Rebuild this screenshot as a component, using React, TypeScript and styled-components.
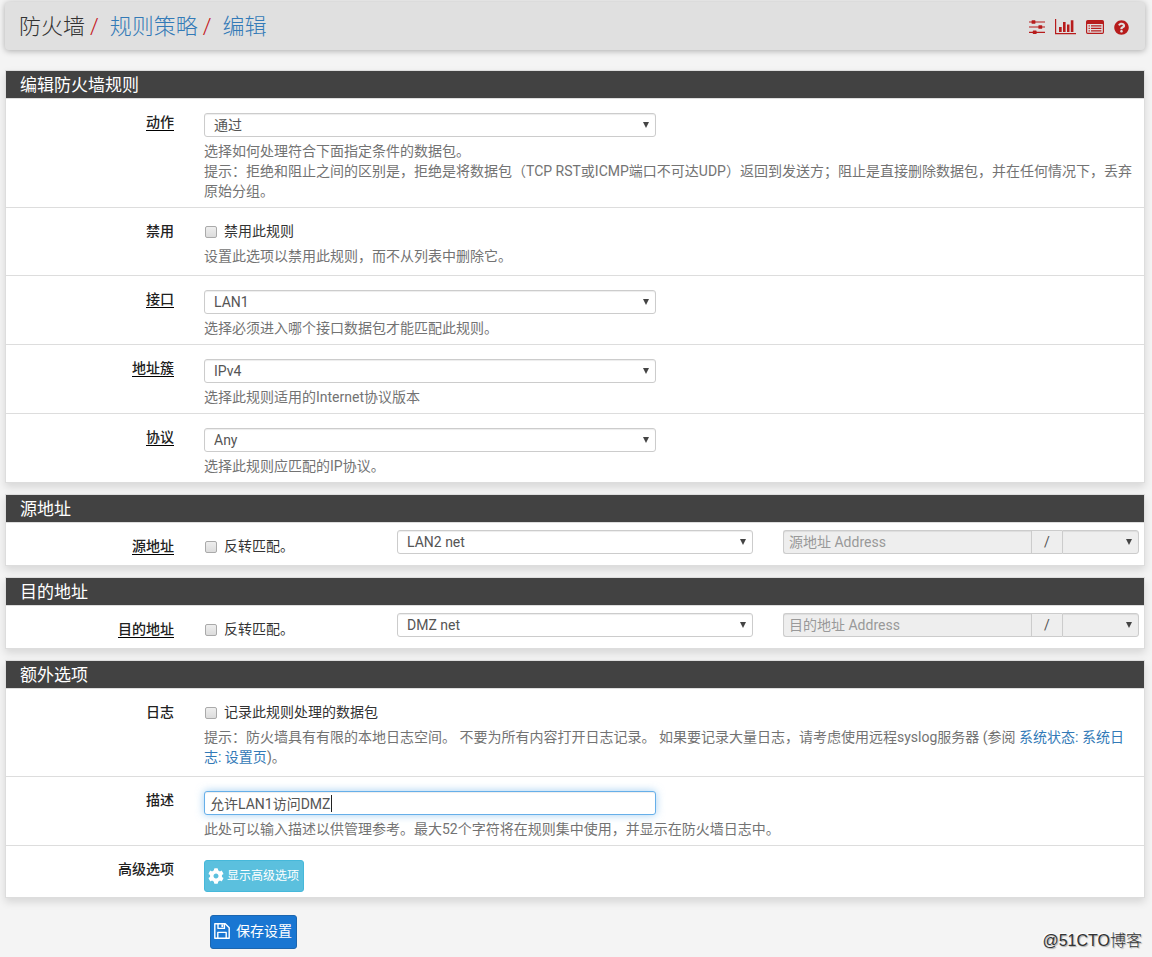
import React from "react";
import styled, { createGlobalStyle, css } from "styled-components";
import { FaCog, FaQuestionCircle } from "react-icons/fa";

const GlobalStyle = createGlobalStyle`
  *, *::before, *::after { box-sizing: border-box; }
  body {
    margin: 0;
    background: #f4f4f4;
    color: #333;
    font: 14px/20px Roboto, "Noto Sans CJK SC", sans-serif;
    text-spacing-trim: space-all;
  }
  a { color: #337ab7; text-decoration: none; }
  a:hover { text-decoration: underline; }
`;

const Page = styled.div`
  position: relative;
  padding: 2px 7px 8px 5px;
`;

const Header = styled.header`
  display: flex;
  align-items: center;
  justify-content: space-between;
  height: 48px;
  margin-bottom: 20px;
  padding: 2px 16px 0 14px;
  background: #e0e0e0;
  border-radius: 4px;
  box-shadow: 0 1px 6px rgba(0, 0, 0, 0.3);
`;

const Breadcrumb = styled.ol`
  display: flex;
  margin: 0;
  padding: 0;
  list-style: none;
  font-size: 22px;
  line-height: 30px;
  font-weight: 300;

  li + li::before {
    content: "/";
    padding: 0 11px 0 5px;
    color: #c4161c;
  }
`;

const HeaderIcons = styled.nav`
  display: flex;
  align-items: center;
  gap: 10px;

  a { display: block; color: #b71c1c; }
  svg { display: block; }
`;

const PanelBox = styled.section`
  margin-bottom: 11px;
  background: #fff;
  border: 1px solid #ddd;
  box-shadow: 0 4px 8px rgba(0, 0, 0, 0.12);
`;

const PanelTitle = styled.h2`
  margin: 0;
  padding: 1px 14px 0;
  background: #424242;
  border-bottom: 1px solid #ddd;
  color: #fff;
  font-size: 17px;
  line-height: 26px;
  font-weight: 400;
`;

const PanelBody = styled.div`
  overflow: hidden;

  > * + * { border-top: 1px solid #ddd; }
`;

const Row = styled.div<{ $split?: boolean }>`
  display: grid;
  grid-template-columns: ${(p) => (p.$split ? "2fr 2fr 4fr 4fr" : "2fr 10fr")};
  margin: 0 -10px;

  > * { min-width: 0; padding: 0 15px; }
`;

const LabelCell = styled.div`
  && { padding-top: 13px; }
  text-align: right;
  font-weight: 500;
`;

const LabelText = styled.label<{ $required?: boolean }>`
  display: inline-block;
  color: #212121;
  line-height: 20px;
  ${(p) =>
    p.$required &&
    css`
      text-decoration: underline 1px #000;
      text-underline-offset: 3px;
    `}
`;

const FieldCell = styled.div<{ $kind?: "check" | "button" }>`
  && {
    padding-top: ${(p) => (p.$kind === "check" ? 13 : 14)}px;
    padding-bottom: ${(p) => (p.$kind === "check" ? 9 : p.$kind === "button" ? 5 : 6)}px;
  }
`;

const SplitCell = styled.div<{ $check?: boolean }>`
  && {
    padding-top: ${(p) => (p.$check ? 13 : 7)}px;
    padding-bottom: ${(p) => (p.$check ? 9 : 11)}px;
  }
`;

const Help = styled.p<{ $gap?: number }>`
  margin: ${(p) => p.$gap ?? 4}px 0 0;
  color: #737373;
`;

/* five of the ten columns of a field, less the gutter */
const Half = styled.div`
  position: relative;
  width: calc(50% - 16px);
`;

const boxed = css`
  display: block;
  width: 100%;
  height: 24px;
  margin: 0;
  background: #fff;
  border: 1px solid #ccc;
  border-radius: 3px;
  box-shadow: inset 0 1px 1px rgba(0, 0, 0, 0.075);
  color: #555;
  font: inherit;
  line-height: 20px;
  outline: none;

  &:disabled { background: #eee; opacity: 1; }
`;

const SelectWrap = styled.div<{ $attached?: boolean }>`
  position: relative;
  flex: none;
  width: ${(p) => (p.$attached ? "77px" : "100%")};

  &::after {
    content: "";
    position: absolute;
    top: 9px;
    right: 7px;
    border: solid transparent;
    border-width: 6px 3px 0;
    border-top-color: #444;
    pointer-events: none;
  }
`;

const SelectBox = styled.select<{ $attached?: boolean }>`
  ${boxed}
  appearance: none;
  padding: 0 20px 0 9px;
  ${(p) => p.$attached && "border-radius: 0 3px 3px 0;"}
`;

const TextBox = styled.input<{ $active?: boolean; $attached?: boolean }>`
  ${boxed}
  padding: 0 5px;
  ${(p) => p.$attached && "flex: 1; min-width: 0; border-right: 0; border-radius: 3px 0 0 3px;"}
  ${(p) =>
    p.$active &&
    css`
      border-color: #66afe9;
      box-shadow: inset 0 1px 1px rgba(0, 0, 0, 0.075), 0 0 8px rgba(102, 175, 233, 0.6);
    `}
  &::placeholder { color: #999; opacity: 1; }
`;

const Caret = styled.span`
  position: absolute;
  top: 4px;
  left: 127px;
  width: 1px;
  height: 17px;
  background: #222;
`;

const InputGroup = styled.div`
  display: flex;
`;

const Addon = styled.span`
  flex: none;
  width: 31px;
  height: 24px;
  background: #eee;
  border: 1px solid #ccc;
  border-right: 0;
  color: #555;
  line-height: 22px;
  text-align: center;
`;

const CheckLabel = styled.label`
  display: flex;
  align-items: center;
  gap: 7px;
`;

const CheckBox = styled.input`
  appearance: none;
  width: 12px;
  height: 12px;
  margin: 2px 0 0 1px;
  background: linear-gradient(#eee, #dcdcdc);
  border: 1px solid #aaa;
  border-radius: 2px;

  &:checked { background: #1976d2; }
`;

const Button = styled.button<{ $primary?: boolean }>`
  display: flex;
  align-items: center;
  gap: ${(p) => (p.$primary ? 6 : 3)}px;
  height: ${(p) => (p.$primary ? 34 : 32)}px;
  padding: ${(p) => (p.$primary ? "0 4px 2px 3px" : "0 4px 0 3px")};
  background: ${(p) => (p.$primary ? "#1976d2" : "#5bc0de")};
  border: 1px solid ${(p) => (p.$primary ? "#1c66af" : "#46b8da")};
  border-radius: 3px;
  color: #fff;
  font: inherit;
  font-size: ${(p) => (p.$primary ? 14 : 12)}px;
  white-space: nowrap;
  cursor: pointer;
`;

const Actions = styled.div`
  padding: 6px 0 0 205px;
`;

const Watermark = styled.div`
  position: absolute;
  right: 10px;
  bottom: 6px;
  color: #333;
  font: 300 16px/20px "Liberation Sans", "Noto Sans CJK SC", sans-serif;
  text-shadow: 1px 1px 1px #aaa, -1px -1px 0 #fff;
`;

const SlidersIcon = () => (
  <svg width="16" height="16" viewBox="0 0 16 16" fill="currentColor" aria-hidden="true">
    <path d="M0 2.4h3v1.2H0zM6 2.4h10v1.2H6zM0 7.4h10v1.2H0zM13 7.4h3v1.2h-3zM0 12.7h4v1.2H0zM7 12.7h9v1.2H7z" />
    <rect x="2.6" y="1.2" width="3.8" height="3.6" rx=".6" />
    <rect x="9.4" y="6.2" width="3.8" height="3.6" rx=".6" />
    <rect x="3.8" y="11.5" width="3.8" height="3.6" rx=".6" />
  </svg>
);

const ChartIcon = () => (
  <svg width="21" height="16" viewBox="0 0 21 16" fill="currentColor" aria-hidden="true">
    <path d="M0 0h1.2v14h19.8v1.2H0zM4 8h2.7v5H4zM8 3h2.6v10H8zM12 5.5h2.5v7.5H12zM15.8 1.2h2.6V13h-2.6z" />
  </svg>
);

const ListIcon = () => (
  <svg width="18" height="16" viewBox="0 0 18 16" fill="currentColor" aria-hidden="true">
    <path
      fillRule="evenodd"
      d="M1.7 1h14.6Q18 1 18 2.7v10.6q0 1.7-1.7 1.7H1.7Q0 15 0 13.3V2.7Q0 1 1.7 1zM1.2 5v8.2q0 .6.6.6h14.4q.6 0 .6-.6V5z"
    />
    <path d="M2.6 6.2h1.2v1.2H2.6zM5 6.2h10.4v1.2H5zM2.6 8.7h1.2v1.2H2.6zM5 8.7h10.4v1.2H5zM2.6 11.2h1.2v1.2H2.6zM5 11.2h10.4v1.2H5z" />
  </svg>
);

const SaveIcon = () => (
  <svg width="16" height="16" viewBox="0 0 16 16" fill="none" stroke="currentColor" strokeWidth="1.4" strokeLinejoin="round" aria-hidden="true">
    <path d="M.8.8h10.4l4 4v10.4H.8z" />
    <path d="M3.8 15V9.4h8.4V15" />
    <path d="M4 1v4.4h6.4V1" />
    <path d="M7.4 1.4h1.8v2.8H7.4z" fill="currentColor" stroke="none" />
  </svg>
);

function Panel({ title, children }: { title: string; children: React.ReactNode }) {
  return (
    <PanelBox>
      <PanelTitle>{title}</PanelTitle>
      <PanelBody>{children}</PanelBody>
    </PanelBox>
  );
}

function Label({ htmlFor, required, children }: { htmlFor: string; required?: boolean; children: React.ReactNode }) {
  return (
    <LabelCell>
      <LabelText htmlFor={htmlFor} $required={required}>
        {children}
      </LabelText>
    </LabelCell>
  );
}

type SelectProps = { id?: string; options: string[]; attached?: boolean; disabled?: boolean; label?: string };

function Select({ id, options, attached, disabled, label }: SelectProps) {
  return (
    <SelectWrap $attached={attached}>
      <SelectBox id={id} $attached={attached} disabled={disabled} aria-label={label}>
        {options.map((o) => (
          <option key={o}>{o}</option>
        ))}
      </SelectBox>
    </SelectWrap>
  );
}

function SelectRow({ id, label, value, children }: { id: string; label: string; value: string; children: React.ReactNode }) {
  return (
    <Row>
      <Label htmlFor={id} required>{label}</Label>
      <FieldCell>
        <Half>
          <Select id={id} options={[value]} />
        </Half>
        <Help>{children}</Help>
      </FieldCell>
    </Row>
  );
}

function CheckRow({ id, label, text, children }: { id: string; label: string; text: string; children: React.ReactNode }) {
  return (
    <Row>
      <Label htmlFor={id}>{label}</Label>
      <FieldCell $kind="check">
        <CheckLabel>
          <CheckBox id={id} type="checkbox" />
          {text}
        </CheckLabel>
        <Help $gap={5}>{children}</Help>
      </FieldCell>
    </Row>
  );
}

function AddressPanel({ id, title, net }: { id: string; title: string; net: string }) {
  return (
    <Panel title={title}>
      <Row $split>
        <Label htmlFor={id} required>{title}</Label>
        <SplitCell $check>
          <CheckLabel>
            <CheckBox type="checkbox" />
            反转匹配。
          </CheckLabel>
        </SplitCell>
        <SplitCell>
          <Select id={id} options={[net]} />
        </SplitCell>
        <SplitCell>
          <InputGroup>
            <TextBox $attached disabled placeholder={`${title} Address`} aria-label={`${title} Address`} />
            <Addon>/</Addon>
            <Select attached disabled options={[""]} label="/" />
          </InputGroup>
        </SplitCell>
      </Row>
    </Panel>
  );
}

export default function App() {
  return (
    <>
      <GlobalStyle />
      <Page>
        <Header>
          <Breadcrumb>
            <li>防火墙</li>
            <li><a href="#rules">规则策略</a></li>
            <li><a href="#edit">编辑</a></li>
          </Breadcrumb>
          <HeaderIcons>
            <a href="#settings"><SlidersIcon /></a>
            <a href="#status"><ChartIcon /></a>
            <a href="#log"><ListIcon /></a>
            <a href="#help"><FaQuestionCircle size={15} /></a>
          </HeaderIcons>
        </Header>

        <Panel title="编辑防火墙规则">
          <SelectRow id="action" label="动作" value="通过">
            选择如何处理符合下面指定条件的数据包。
            <br />
            提示：拒绝和阻止之间的区别是，拒绝是将数据包（TCP RST或ICMP端口不可达UDP）返回到发送方；阻止是直接删除数据包，并在任何情况下，丢弃原始分组。
          </SelectRow>
          <CheckRow id="disabled" label="禁用" text="禁用此规则">
            设置此选项以禁用此规则，而不从列表中删除它。
          </CheckRow>
          <SelectRow id="interface" label="接口" value="LAN1">
            选择必须进入哪个接口数据包才能匹配此规则。
          </SelectRow>
          <SelectRow id="family" label="地址簇" value="IPv4">
            选择此规则适用的Internet协议版本
          </SelectRow>
          <SelectRow id="protocol" label="协议" value="Any">
            选择此规则应匹配的IP协议。
          </SelectRow>
        </Panel>

        <AddressPanel id="source" title="源地址" net="LAN2 net" />
        <AddressPanel id="destination" title="目的地址" net="DMZ net" />

        <Panel title="额外选项">
          <CheckRow id="log" label="日志" text="记录此规则处理的数据包">
            提示：防火墙具有有限的本地日志空间。 不要为所有内容打开日志记录。 如果要记录大量日志，请考虑使用远程syslog服务器 (参阅{" "}
            <a href="#syslog">系统状态: 系统日志: 设置页</a>)。
          </CheckRow>
          <Row>
            <Label htmlFor="descr">描述</Label>
            <FieldCell>
              <Half>
                <TextBox id="descr" type="text" $active defaultValue="允许LAN1访问DMZ" />
                <Caret />
              </Half>
              <Help>此处可以输入描述以供管理参考。最大52个字符将在规则集中使用，并显示在防火墙日志中。</Help>
            </FieldCell>
          </Row>
          <Row>
            <Label htmlFor="advanced">高级选项</Label>
            <FieldCell $kind="button">
              <Button id="advanced" type="button">
                <FaCog size={16} />
                显示高级选项
              </Button>
            </FieldCell>
          </Row>
        </Panel>

        <Actions>
          <Button $primary type="submit">
            <SaveIcon />
            保存设置
          </Button>
        </Actions>
        <Watermark>@51CTO博客</Watermark>
      </Page>
    </>
  );
}
